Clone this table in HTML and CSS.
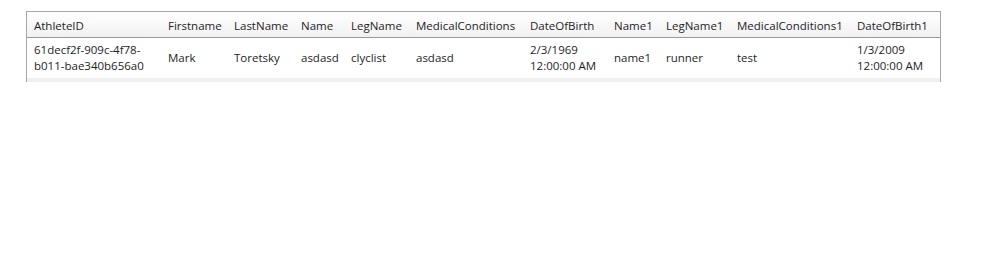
FILE: index.html
```html
<!DOCTYPE html>
<html>
<head>
<meta charset="utf-8">
<link rel="stylesheet" href="styles.css">
</head>
<body>
<div class="grid">
  <table class="tbl">
    <colgroup>
      <col class="c1"><col class="c2"><col class="c3"><col class="c4"><col class="c5"><col class="c6"><col class="c7"><col class="c8"><col class="c9"><col class="c10"><col class="c11">
    </colgroup>
    <thead>
      <tr>
        <th>AthleteID</th><th>Firstname</th><th>LastName</th><th>Name</th><th>LegName</th><th>MedicalConditions</th><th>DateOfBirth</th><th>Name1</th><th>LegName1</th><th>MedicalConditions1</th><th>DateOfBirth1</th>
      </tr>
    </thead>
    <tbody>
      <tr>
        <td>61decf2f-909c-4f78-<br>b011-bae340b656a0</td><td>Mark</td><td>Toretsky</td><td>asdasd</td><td>clyclist</td><td>asdasd</td><td>2/3/1969<br>12:00:00 AM</td><td>name1</td><td>runner</td><td>test</td><td>1/3/2009<br>12:00:00 AM</td>
      </tr>
    </tbody>
  </table>
  <div class="strip"></div>
</div>
</body>
</html>
```
FILE: styles.css
```css
html, body { margin: 0; padding: 0; background: #fff; }
body { font-family: "Open Sans", "Noto Sans", sans-serif; font-size: 11.5px; color: #222; }
.grid {
  margin: 11px 0 0 26px;
  width: 913px;
  border: 1px solid #a6a6a6;
  border-bottom: none;
  overflow: hidden;
}
.tbl { border-collapse: collapse; table-layout: fixed; width: 913px; }
.c1 { width: 134px; } .c2 { width: 66px; } .c3 { width: 67px; } .c4 { width: 50px; }
.c5 { width: 65px; } .c6 { width: 114px; } .c7 { width: 84px; } .c8 { width: 52px; }
.c9 { width: 71px; } .c10 { width: 120px; } .c11 { width: 90px; }
th {
  height: 24px; padding: 1px 0 0 7px; text-align: left; font-weight: normal;
  background: linear-gradient(#ffffff, #f1f1f1);
  border-bottom: 1px solid #9a9a9a; white-space: nowrap; color: #1e1e1e;
}
td { height: 40px; padding: 0 0 0 7px; line-height: 16px; vertical-align: middle; white-space: nowrap; color: #1e1e1e; }
.strip { height: 4px; background: #f0f0f0; }
```
